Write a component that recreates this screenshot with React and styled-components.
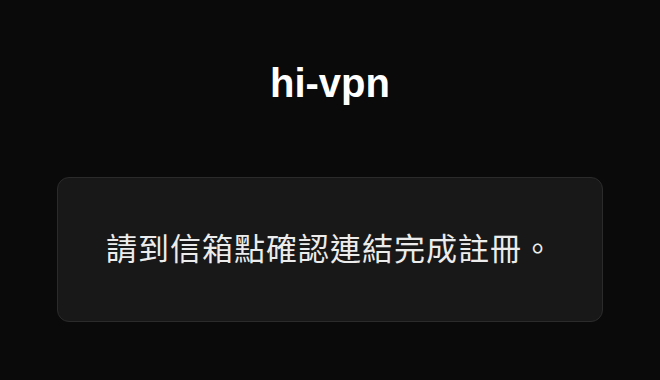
import React from "react"
import styled, { createGlobalStyle } from "styled-components"

const GlobalStyle = createGlobalStyle`
  html, body {
    margin: 0;
    padding: 0;
    background: #0a0a0a;
  }
  body {
    font-family: "Liberation Sans", Arial, "Noto Sans CJK TC", sans-serif;
    color: #f2f2f2;
  }
`

const Page = styled.main`
  width: 660px;
  height: 380px;
  display: flex;
  flex-direction: column;
  align-items: center;
  box-sizing: border-box;
  padding-top: 60px;
`

const Title = styled.h1`
  margin: 0;
  font-size: 40px;
  line-height: 46px;
  font-weight: bold;
  color: #ffffff;
`

const Card = styled.section`
  margin-top: 71px;
  width: 546px;
  height: 145px;
  box-sizing: border-box;
  padding-bottom: 6px;
  background: #181818;
  border: 1px solid #2b2b2b;
  border-radius: 12px;
  display: flex;
  align-items: center;
  justify-content: center;
`

const Message = styled.p`
  margin: 0;
  font-family: "Noto Sans CJK TC", sans-serif;
  font-size: 31px;
  line-height: 40px;
  letter-spacing: 1px;
  color: #ececec;
`

export default function App() {
  return (
    <>
      <GlobalStyle />
      <Page>
        <Title>hi-vpn</Title>
        <Card>
          <Message>請到信箱點確認連結完成註冊。</Message>
        </Card>
      </Page>
    </>
  )
}
